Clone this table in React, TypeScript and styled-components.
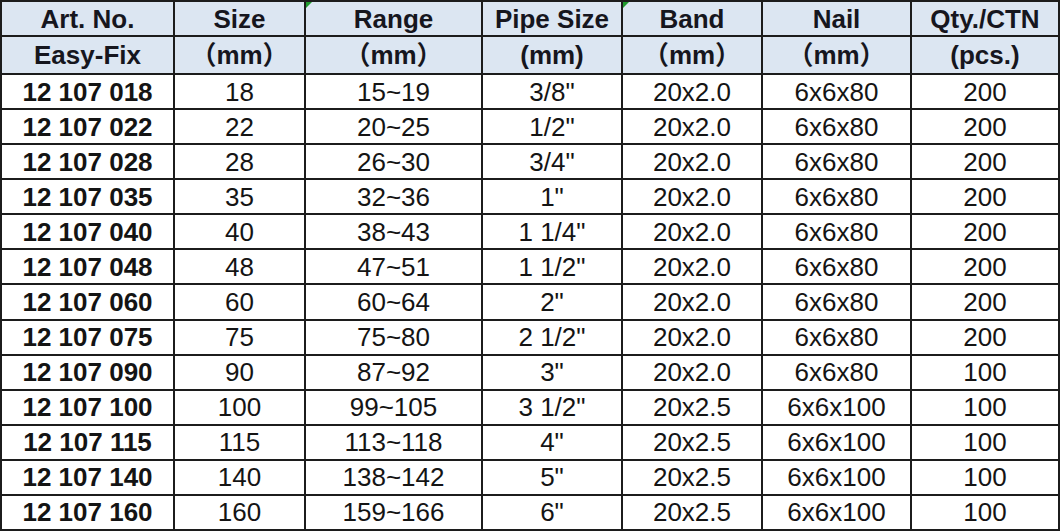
import styled, { createGlobalStyle } from "styled-components";

const GlobalStyle = createGlobalStyle`
  html, body {
    margin: 0;
    padding: 0;
    background: #ffffff;
  }
`;

type Row = [string, string, string, string, string, string, string];

const rows: Row[] = [
  ["12 107 018", "18", "15~19", '3/8"', "20x2.0", "6x6x80", "200"],
  ["12 107 022", "22", "20~25", '1/2"', "20x2.0", "6x6x80", "200"],
  ["12 107 028", "28", "26~30", '3/4"', "20x2.0", "6x6x80", "200"],
  ["12 107 035", "35", "32~36", '1"', "20x2.0", "6x6x80", "200"],
  ["12 107 040", "40", "38~43", '1 1/4"', "20x2.0", "6x6x80", "200"],
  ["12 107 048", "48", "47~51", '1 1/2"', "20x2.0", "6x6x80", "200"],
  ["12 107 060", "60", "60~64", '2"', "20x2.0", "6x6x80", "200"],
  ["12 107 075", "75", "75~80", '2 1/2"', "20x2.0", "6x6x80", "200"],
  ["12 107 090", "90", "87~92", '3"', "20x2.0", "6x6x80", "100"],
  ["12 107 100", "100", "99~105", '3 1/2"', "20x2.5", "6x6x100", "100"],
  ["12 107 115", "115", "113~118", '4"', "20x2.5", "6x6x100", "100"],
  ["12 107 140", "140", "138~142", '5"', "20x2.5", "6x6x100", "100"],
  ["12 107 160", "160", "159~166", '6"', "20x2.5", "6x6x100", "100"],
];

const titles = ["Art. No.", "Size", "Range", "Pipe Size", "Band", "Nail", "Qty./CTN"];
const units = ["Easy-Fix", "（mm）", "（mm）", "(mm)", "（mm）", "（mm）", "(pcs.)"];
// columns with the little green excel marker in the corner
const flagged = [2, 4];

export default function App() {
  return (
    <>
      <GlobalStyle />
      <Sheet>
        {titles.map((t, i) => (
          <HeadCell key={"t" + i}>
            {flagged.includes(i) && <Marker />}
            {t}
          </HeadCell>
        ))}
        {units.map((u, i) => (
          <HeadCell key={"u" + i}>{u}</HeadCell>
        ))}
        {rows.map((r) =>
          r.map((v, i) => (
            <Cell key={r[0] + i} $bold={i === 0}>
              {v}
            </Cell>
          ))
        )}
      </Sheet>
    </>
  );
}

const Sheet = styled.div`
  display: grid;
  grid-template-columns: 171px 129px 175px 138px 138px 147px 146px;
  grid-template-rows: 33px 36px repeat(13, 1fr);
  gap: 2px;
  padding: 2px;
  width: 1060px;
  height: 531px;
  box-sizing: border-box;
  background: #1c1c1c;
  font-family: "Liberation Sans", Arial, "Noto Sans CJK SC", sans-serif;
`;

const Cell = styled.div<{ $bold?: boolean }>`
  display: flex;
  align-items: center;
  justify-content: center;
  background: #ffffff;
  color: #141414;
  font-size: 26px;
  font-weight: ${(p) => (p.$bold ? 700 : 400)};
  white-space: nowrap;
  line-height: 1;
`;

const HeadCell = styled(Cell)`
  position: relative;
  background: #dce6f2;
  color: #16161e;
  font-weight: 700;
`;

const Marker = styled.span`
  position: absolute;
  top: 0;
  left: 0;
  width: 0;
  height: 0;
  border-top: 6px solid #1f9a2e;
  border-right: 6px solid transparent;
`;
